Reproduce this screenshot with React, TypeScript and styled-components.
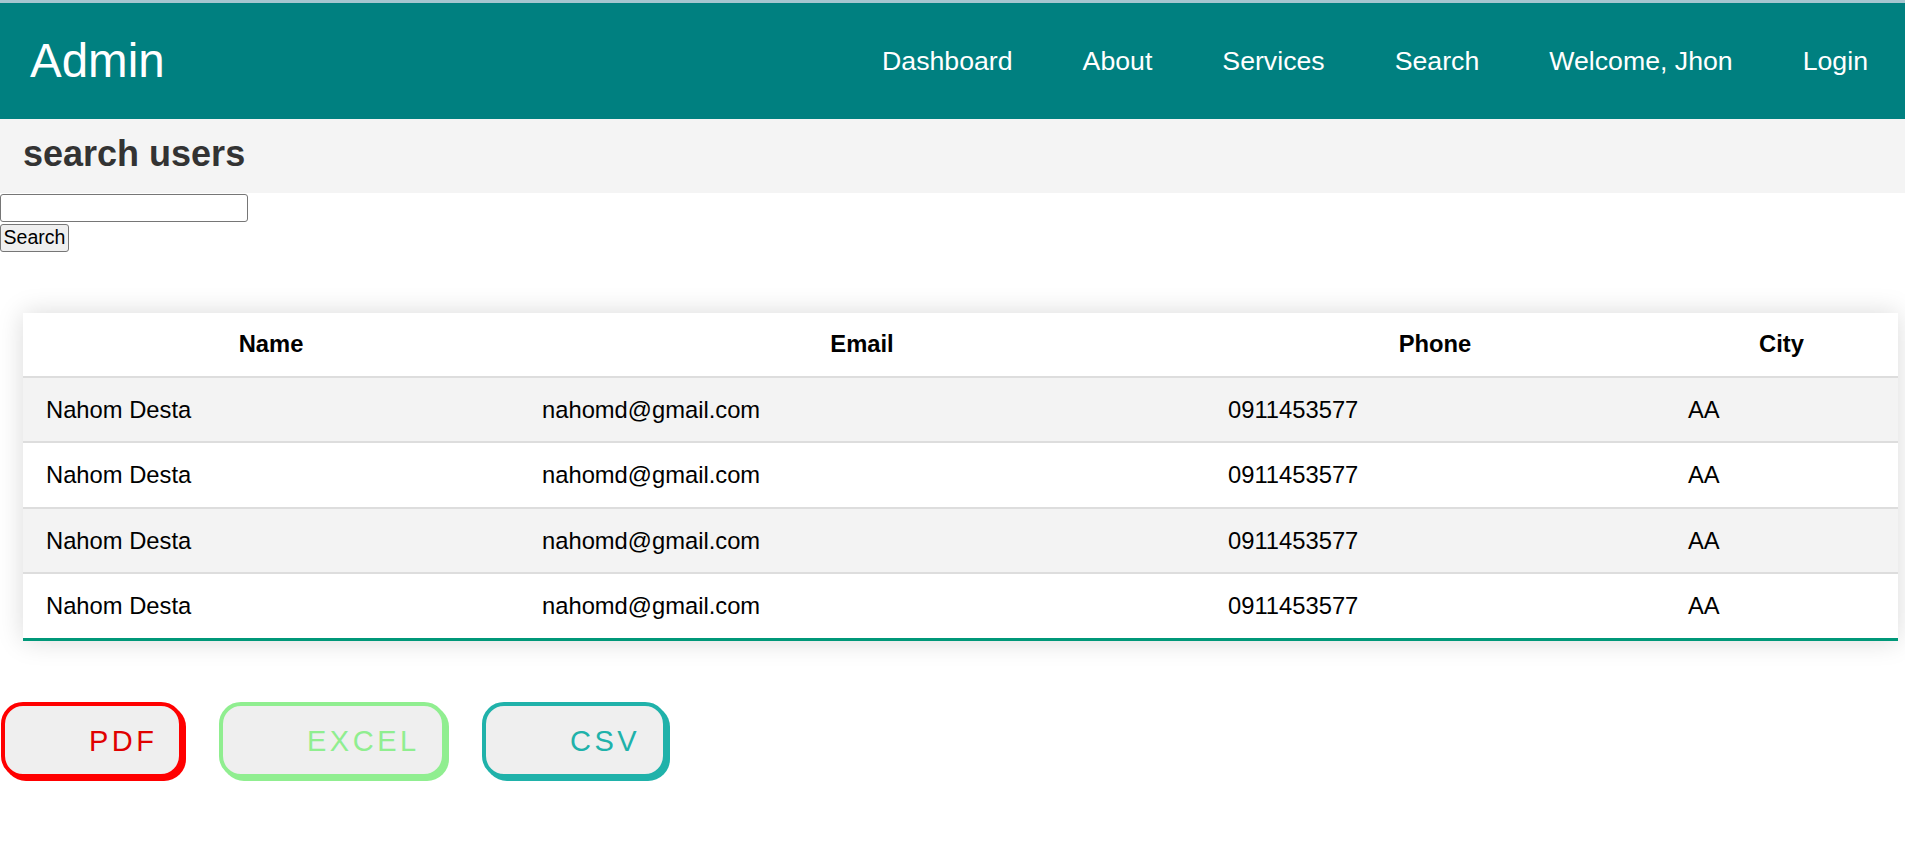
import React from "react";
import styled, { createGlobalStyle } from "styled-components";

const GlobalStyle = createGlobalStyle`
  html, body {
    margin: 0;
    padding: 0;
    background: #ffffff;
    font-family: "Liberation Sans", Arial, sans-serif;
  }
  * { box-sizing: border-box; }
`;

const Page = styled.div`
  width: 1905px;
  min-height: 853px;
  background: #fff;
`;

const TopStrip = styled.div`
  height: 3px;
  background: #a6c6d0;
`;

const Header = styled.header`
  height: 116px;
  background: #008080;
  display: flex;
  align-items: center;
  justify-content: space-between;
  padding: 0 37px 0 30px;
`;

const Brand = styled.div`
  color: #fff;
  font-size: 47.5px;
  line-height: 1;
`;

const Nav = styled.nav`
  display: flex;
  align-items: center;
  gap: 70px;
`;

const NavLink = styled.a`
  color: #fff;
  font-size: 26.7px;
  text-decoration: none;
  line-height: 1;
  cursor: pointer;
`;

const TitleBar = styled.div`
  background: #f4f4f4;
  height: 74px;
  padding: 15px 23px 0;
`;

const Title = styled.h2`
  margin: 0;
  font-size: 36px;
  font-weight: 700;
  color: #333;
  line-height: 40px;
`;

const SearchForm = styled.form`
  display: flex;
  flex-direction: column;
  align-items: flex-start;
  padding-top: 1px;
`;

const SearchInput = styled.input`
  width: 248px;
  height: 28px;
  margin: 0;
  border: 1px solid #767676;
  border-radius: 3px;
  padding: 2px 3px;
  font-size: 16.7px;
  font-family: "Liberation Sans", Arial, sans-serif;
  background: #fff;
`;

const SearchButton = styled.button`
  margin-top: 2px;
  height: 28px;
  width: 69px;
  padding: 0 2px;
  border: 1px solid #767676;
  border-radius: 3px;
  background: #efefef;
  color: #000;
  font-size: 19.5px;
  line-height: 1;
  font-family: "Liberation Sans", Arial, sans-serif;
`;

const TableCard = styled.div`
  margin: 61px 7px 0 23px;
  box-shadow: 0 0 25px rgba(0, 0, 0, 0.15);
`;

const Table = styled.table`
  width: 1875px;
  border-collapse: collapse;
  table-layout: fixed;
  font-size: 23.75px;
  color: #000;
`;

const HeadCell = styled.th`
  font-weight: 700;
  text-align: center;
  padding: 18px 23px;
  line-height: 26.5px;
  border-bottom: 2px solid #dddddd;
  background: #fff;
`;

const Row = styled.tr<{ $shaded: boolean; $last: boolean }>`
  background: ${(p) => (p.$shaded ? "#f3f3f3" : "#ffffff")};
  border-bottom: ${(p) => (p.$last ? "3px solid #009879" : "2px solid #dddddd")};
`;

const Cell = styled.td`
  padding: 18px 23px;
  line-height: 27.6px;
  text-align: left;
  white-space: nowrap;
`;

const ExportRow = styled.div`
  display: flex;
  gap: 36px;
  margin-top: 61px;
  padding-left: 1px;
`;

const ExportButton = styled.button<{ $color: string; $text: string; $w: number }>`
  width: ${(p) => p.$w}px;
  height: 76px;
  border: 4px solid ${(p) => p.$color};
  box-shadow: 3px 3px 0 ${(p) => p.$color};
  border-radius: 22px;
  background: #efefef;
  color: ${(p) => p.$text};
  font-family: "Liberation Sans", Arial, sans-serif;
  font-size: 29px;
  letter-spacing: 3.5px;
  text-align: left;
  padding: 4px 0 0 84px;
  cursor: pointer;
`;

const users = [
  { name: "Nahom Desta", email: "nahomd@gmail.com", phone: "0911453577", city: "AA" },
  { name: "Nahom Desta", email: "nahomd@gmail.com", phone: "0911453577", city: "AA" },
  { name: "Nahom Desta", email: "nahomd@gmail.com", phone: "0911453577", city: "AA" },
  { name: "Nahom Desta", email: "nahomd@gmail.com", phone: "0911453577", city: "AA" },
];

export default function App() {
  return (
    <Page>
      <GlobalStyle />
      <TopStrip />
      <Header>
        <Brand>Admin</Brand>
        <Nav>
          <NavLink>Dashboard</NavLink>
          <NavLink>About</NavLink>
          <NavLink>Services</NavLink>
          <NavLink>Search</NavLink>
          <NavLink>Welcome, Jhon</NavLink>
          <NavLink>Login</NavLink>
        </Nav>
      </Header>
      <TitleBar>
        <Title>search users</Title>
      </TitleBar>
      <SearchForm onSubmit={(e) => e.preventDefault()}>
        <SearchInput type="text" />
        <SearchButton type="submit">Search</SearchButton>
      </SearchForm>
      <TableCard>
        <Table>
          <colgroup>
            <col style={{ width: 496 }} />
            <col style={{ width: 686 }} />
            <col style={{ width: 460 }} />
            <col style={{ width: 233 }} />
          </colgroup>
          <thead>
            <tr>
              <HeadCell>Name</HeadCell>
              <HeadCell>Email</HeadCell>
              <HeadCell>Phone</HeadCell>
              <HeadCell>City</HeadCell>
            </tr>
          </thead>
          <tbody>
            {users.map((u, i) => (
              <Row key={i} $shaded={i % 2 === 0} $last={i === users.length - 1}>
                <Cell>{u.name}</Cell>
                <Cell>{u.email}</Cell>
                <Cell>{u.phone}</Cell>
                <Cell>{u.city}</Cell>
              </Row>
            ))}
          </tbody>
        </Table>
      </TableCard>
      <ExportRow>
        <ExportButton $color="#ff0000" $text="#e00000" $w={182}>PDF</ExportButton>
        <ExportButton $color="#90ee90" $text="#90ee90" $w={227}>EXCEL</ExportButton>
        <ExportButton $color="#20b2aa" $text="#20b2aa" $w={185}>CSV</ExportButton>
      </ExportRow>
    </Page>
  );
}
